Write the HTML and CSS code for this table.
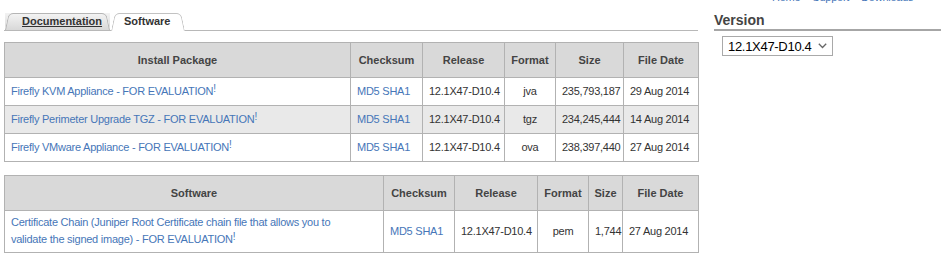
FILE: index.html
```html
<!DOCTYPE html>
<html>
<head>
<meta charset="utf-8">
<title>Software Downloads</title>
<link rel="stylesheet" href="styles.css">
</head>
<body>
<div class="page">
  <div class="main">
    <div class="tabs">
      <a class="tab tab-doc" href="#">Documentation</a>
      <span class="tab tab-active">Software</span>
    </div>

    <table class="dl dl-install">
      <colgroup>
        <col class="c1-pkg"><col class="c1-sum"><col class="c1-rel"><col class="c1-fmt"><col class="c1-size"><col class="c1-date">
      </colgroup>
      <thead>
        <tr><th>Install Package</th><th>Checksum</th><th>Release</th><th>Format</th><th>Size</th><th>File Date</th></tr>
      </thead>
      <tbody>
        <tr>
          <td><a href="#">Firefly KVM Appliance - FOR EVALUATION</a><sup>!</sup></td>
          <td><a class="sum" href="#">MD5</a> <a class="sum" href="#">SHA1</a></td>
          <td>12.1X47-D10.4</td>
          <td class="fmt">jva</td>
          <td>235,793,187</td>
          <td>29 Aug 2014</td>
        </tr>
        <tr class="alt">
          <td><a href="#">Firefly Perimeter Upgrade TGZ - FOR EVALUATION</a><sup>!</sup></td>
          <td><a class="sum" href="#">MD5</a> <a class="sum" href="#">SHA1</a></td>
          <td>12.1X47-D10.4</td>
          <td class="fmt">tgz</td>
          <td>234,245,444</td>
          <td>14 Aug 2014</td>
        </tr>
        <tr>
          <td><a href="#">Firefly VMware Appliance - FOR EVALUATION</a><sup>!</sup></td>
          <td><a class="sum" href="#">MD5</a> <a class="sum" href="#">SHA1</a></td>
          <td>12.1X47-D10.4</td>
          <td class="fmt">ova</td>
          <td>238,397,440</td>
          <td>27 Aug 2014</td>
        </tr>
      </tbody>
    </table>

    <table class="dl dl-soft">
      <colgroup>
        <col class="c2-pkg"><col class="c2-sum"><col class="c2-rel"><col class="c2-fmt"><col class="c2-size"><col class="c2-date">
      </colgroup>
      <thead>
        <tr><th>Software</th><th>Checksum</th><th>Release</th><th>Format</th><th>Size</th><th>File Date</th></tr>
      </thead>
      <tbody>
        <tr>
          <td><a href="#">Certificate Chain (Juniper Root Certificate chain file that allows you to validate the signed image) - FOR EVALUATION</a><sup>!</sup></td>
          <td><a class="sum" href="#">MD5</a> <a class="sum" href="#">SHA1</a></td>
          <td>12.1X47-D10.4</td>
          <td class="fmt">pem</td>
          <td>1,744</td>
          <td>27 Aug 2014</td>
        </tr>
      </tbody>
    </table>
  </div>

  <aside class="side">
    <nav class="toplinks">
      <a href="#">Home</a>
      <a href="#">Support</a>
      <a href="#">Downloads</a>
    </nav>
    <h2 class="side-title">Version</h2>
    <div class="select-wrap">
      <select class="version">
        <option>12.1X47-D10.4</option>
      </select>
      <svg class="chev" width="9" height="6" viewBox="0 0 9 6"><path d="M0.8 0.8 L4.5 4.5 L8.2 0.8" fill="none" stroke="#666" stroke-width="1.3"/></svg>
    </div>
  </aside>
</div>
</body>
</html>
```

FILE: styles.css
```css
html, body {
  margin: 0;
  padding: 0;
  background: #fff;
}

body {
  font-family: "Liberation Sans", Arial, sans-serif;
  font-size: 11px;
  color: #333;
}

a {
  color: #4676b8;
  text-decoration: none;
}

.page {
  display: flex;
  gap: 16px;
  padding-left: 4px;
}

.main {
  flex: none;
  width: 694px;
}

/* ---------- tabs ---------- */
.tabs {
  display: flex;
  align-items: flex-end;
  height: 17px;
  margin-top: 13px;
  margin-bottom: 11px;
  padding-left: 1px;
  border-bottom: 1px solid #b8b8b8;
}

.tab {
  position: relative;
  z-index: 0;
  display: block;
  box-sizing: border-box;
  height: 17px;
  line-height: 17px;
  font-weight: bold;
  color: #333;
}

.tab::before,
.tab::after {
  content: "";
  position: absolute;
  top: 0;
  bottom: 0;
  z-index: -1;
  border: 1px solid #b5b5b5;
  border-bottom: none;
  background: inherit;
}

.tab::before {
  left: 0;
  right: 45%;
  border-right: none;
  border-radius: 5px 0 0 0;
  transform: skewX(-12deg);
  transform-origin: bottom;
}

.tab::after {
  right: 0;
  left: 45%;
  border-left: none;
  border-radius: 0 5px 0 0;
  transform: skewX(12deg);
  transform-origin: bottom;
}

.tab-doc {
  width: 105px;
  padding-left: 17px;
  text-decoration: underline;
  background: linear-gradient(#f3f3f3, #d8d8d8);
}

.tab-active {
  width: 74px;
  height: 18px;
  margin-bottom: -1px;
  margin-left: 1px;
  padding-left: 13px;
  padding-bottom: 1px;
  background: #fff;
}

.tab-active::before,
.tab-active::after {
  border-color: #c2c2c2;
}

/* ---------- tables ---------- */
.dl {
  width: 694px;
  table-layout: fixed;
  border-collapse: collapse;
  border: 1px solid #aaa;
  letter-spacing: -0.25px;
}

.dl-soft {
  margin-top: 13px;
}

.dl th,
.dl td {
  border: 1px solid #b2b2b2;
  text-align: left;
}

.dl th {
  height: 34px;
  padding: 0 4px;
  background: #d9d9d9;
  color: #444;
  font-weight: bold;
  text-align: center;
  letter-spacing: 0;
}

.dl td {
  height: 28px;
  padding: 3px 6px 3px;
  line-height: 17px;
  box-sizing: border-box;
  vertical-align: middle;
  white-space: nowrap;
}

.dl-soft td:first-child {
  white-space: normal;
  padding: 3px 30px 4px 6px;
}

.dl td.fmt {
  text-align: center;
}

.dl tr.alt td {
  background: #e9e9e9;
}

.dl sup {
  font-size: 10px;
  line-height: 0;
  color: #4676b8;
  vertical-align: 3px;
  letter-spacing: 0;
}

.sum {
  font-size: 11px;
}

.c1-pkg { width: 346px; }
.c1-sum { width: 72px; }
.c1-rel { width: 82px; }
.c1-fmt { width: 51px; }
.c1-size { width: 68px; }
.c1-date { width: 75px; }

.c2-pkg { width: 379px; }
.c2-sum { width: 71px; }
.c2-rel { width: 83px; }
.c2-fmt { width: 51px; }
.c2-size { width: 34px; }
.c2-date { width: 76px; }

/* ---------- side ---------- */
.side {
  flex: 1;
  min-width: 0;
}

.toplinks {
  display: flex;
  gap: 12px;
  margin-top: -9px;
  padding-left: 58px;
  line-height: 13px;
  letter-spacing: -0.25px;
}

.side-title {
  margin: 8px 0 0;
  font-size: 14px;
  line-height: 17px;
  font-weight: bold;
  color: #444;
  border-bottom: 2px solid #a6a6a6;
}

.select-wrap {
  position: relative;
  display: inline-block;
  margin: 5px 0 0 8px;
}

.version {
  appearance: none;
  -webkit-appearance: none;
  display: block;
  box-sizing: border-box;
  width: 111px;
  height: 20px;
  margin: 0;
  padding: 0 0 0 5px;
  border: 1px solid #a9a9a9;
  border-radius: 0;
  background: #fff;
  color: #000;
  font-family: "Liberation Sans", Arial, sans-serif;
  font-size: 13px;
  letter-spacing: -0.3px;
}

.chev {
  position: absolute;
  right: 6px;
  top: 7px;
  pointer-events: none;
}
```
